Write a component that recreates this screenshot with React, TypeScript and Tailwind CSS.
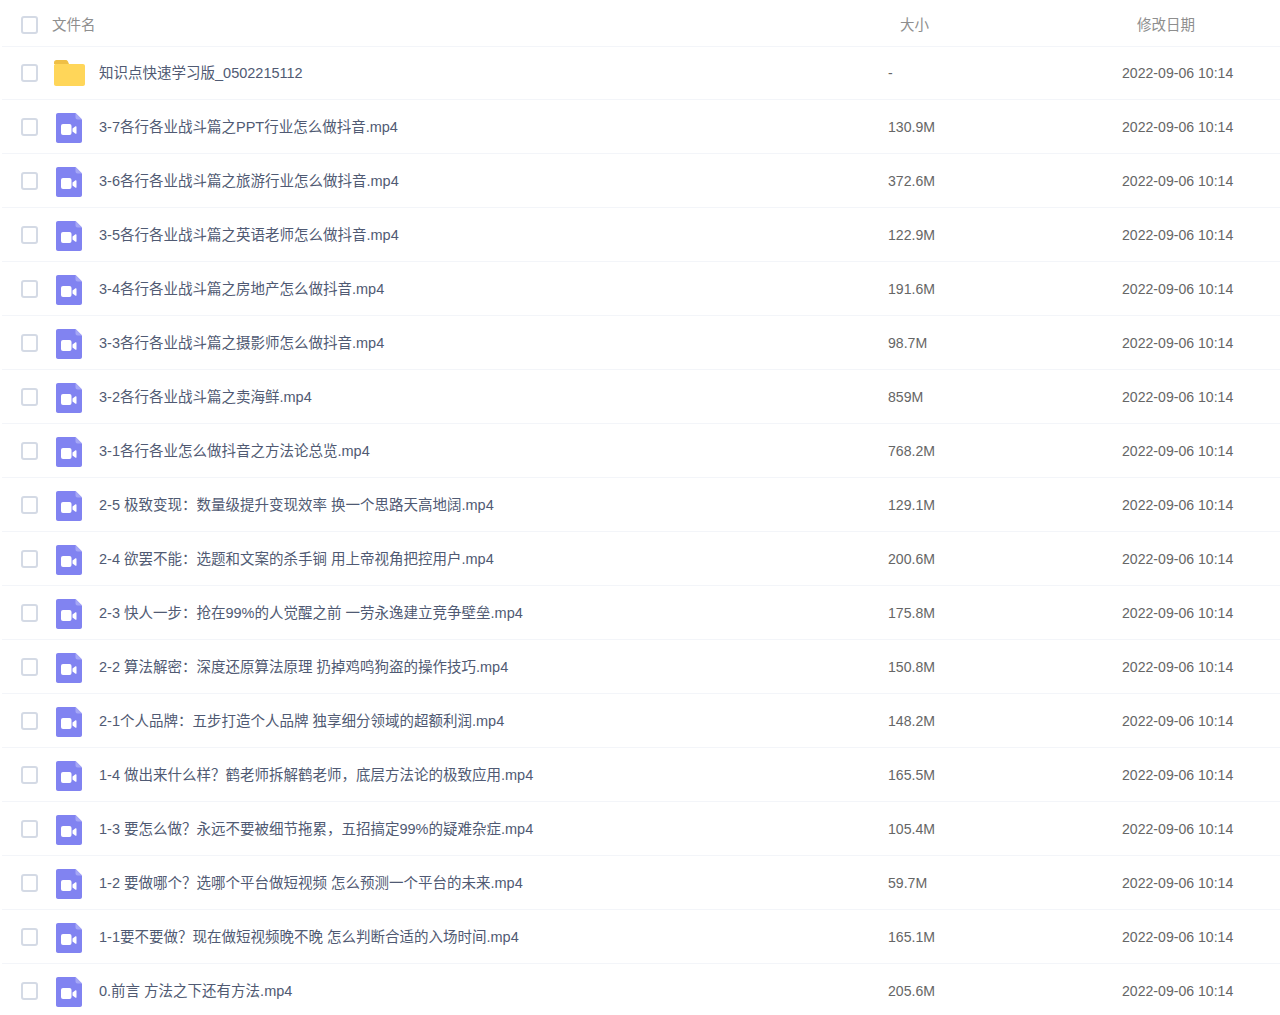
const files: [string, string][] = [
  ["3-7各行各业战斗篇之PPT行业怎么做抖音.mp4", "130.9M"],
  ["3-6各行各业战斗篇之旅游行业怎么做抖音.mp4", "372.6M"],
  ["3-5各行各业战斗篇之英语老师怎么做抖音.mp4", "122.9M"],
  ["3-4各行各业战斗篇之房地产怎么做抖音.mp4", "191.6M"],
  ["3-3各行各业战斗篇之摄影师怎么做抖音.mp4", "98.7M"],
  ["3-2各行各业战斗篇之卖海鲜.mp4", "859M"],
  ["3-1各行各业怎么做抖音之方法论总览.mp4", "768.2M"],
  ["2-5 极致变现：数量级提升变现效率 换一个思路天高地阔.mp4", "129.1M"],
  ["2-4 欲罢不能：选题和文案的杀手锏 用上帝视角把控用户.mp4", "200.6M"],
  ["2-3 快人一步：抢在99%的人觉醒之前 一劳永逸建立竞争壁垒.mp4", "175.8M"],
  ["2-2 算法解密：深度还原算法原理 扔掉鸡鸣狗盗的操作技巧.mp4", "150.8M"],
  ["2-1个人品牌：五步打造个人品牌 独享细分领域的超额利润.mp4", "148.2M"],
  ["1-4 做出来什么样？鹤老师拆解鹤老师，底层方法论的极致应用.mp4", "165.5M"],
  ["1-3 要怎么做？永远不要被细节拖累，五招搞定99%的疑难杂症.mp4", "105.4M"],
  ["1-2 要做哪个？选哪个平台做短视频 怎么预测一个平台的未来.mp4", "59.7M"],
  ["1-1要不要做？现在做短视频晚不晚 怎么判断合适的入场时间.mp4", "165.1M"],
  ["0.前言 方法之下还有方法.mp4", "205.6M"],
];

function Check() {
  return <span className="block w-[17px] h-[18px] shrink-0 rounded-[3px] border-2 border-[#d4dae5] bg-white" />;
}

function FolderIcon() {
  return (
    <svg width="31" height="26" viewBox="0 0 31 26" className="block">
      <path d="M0 2.500C0 1.200 1 0 2.500 0h9c1 0 1.800.5 2.300 1.300L15 4H0z" fill="#efbf45" />
      <path d="M0 5.500C0 4.700.7 4 1.500 4H29c1.100 0 2 .9 2 2v18c0 1.100-.9 2-2 2H2c-1.100 0-2-.9-2-2z" fill="#ffd659" />
    </svg>
  );
}

function VideoIcon() {
  return (
    <svg width="26" height="30" viewBox="0 0 26 30" className="block">
      <path d="M2 0h17.500L26 6.500V28c0 1.100-.9 2-2 2H2c-1.100 0-2-.9-2-2V2C0 .9.9 0 2 0z" fill="#8183f1" />
      <path d="M19.500 0L26 6.500h-4.500c-1.100 0-2-.9-2-2z" fill="#a5a7f6" />
      <rect x="5" y="11" width="10.500" height="11" rx="2" fill="#fff" />
      <path d="M16.500 15.500l3-2.200c.4-.3 1-.1 1 .5v6.400c0 .6-.6.800-1 .5l-3-2.200z" fill="#fff" />
    </svg>
  );
}

function Row({ name, size, folder }: { name: string; size: string; folder?: boolean }) {
  return (
    <div className={folder ? "h-[53px] ml-[2px] flex items-center border-b border-[#f3f5f9]" : "h-[54px] pt-[1px] ml-[2px] flex items-center border-b border-[#f3f5f9]"}>
      <div className="w-[50px] pl-[19px] shrink-0"><Check /></div>
      <div className={folder ? "w-[47px] pl-[2px] shrink-0" : "w-[47px] pl-[4px] mt-[2px] shrink-0"}>{folder ? <FolderIcon /> : <VideoIcon />}</div>
      <div className="w-[789px] pt-[2px] shrink-0 text-[14.5px] text-[#505a73] truncate">{name}</div>
      <div className="w-[234px] pt-[2px] shrink-0 text-[14.1px] text-[#666]">{size}</div>
      <div className="pt-[2px] text-[14.1px] text-[#666]">2022-09-06 10:14</div>
    </div>
  );
}

export default function App() {
  return (
    <div className="w-[1280px] h-[1015px] overflow-hidden bg-white font-['Liberation_Sans','Noto_Sans_CJK_SC',sans-serif]">
      <div className="h-[47px] pt-[4px] ml-[2px] flex items-center border-b border-[#f3f5f9] text-[14.5px] text-[#8e8e8e]">
        <div className="w-[50px] pl-[19px] shrink-0"><Check /></div>
        <div className="w-[848px] pt-[2px] shrink-0">文件名</div>
        <div className="w-[237px] pt-[2px] shrink-0">大小</div>
        <div className="pt-[2px]">修改日期</div>
      </div>
      <Row name="知识点快速学习版_0502215112" size="-" folder />
      {files.map(([n, s]) => <Row key={n} name={n} size={s} />)}
    </div>
  );
}
